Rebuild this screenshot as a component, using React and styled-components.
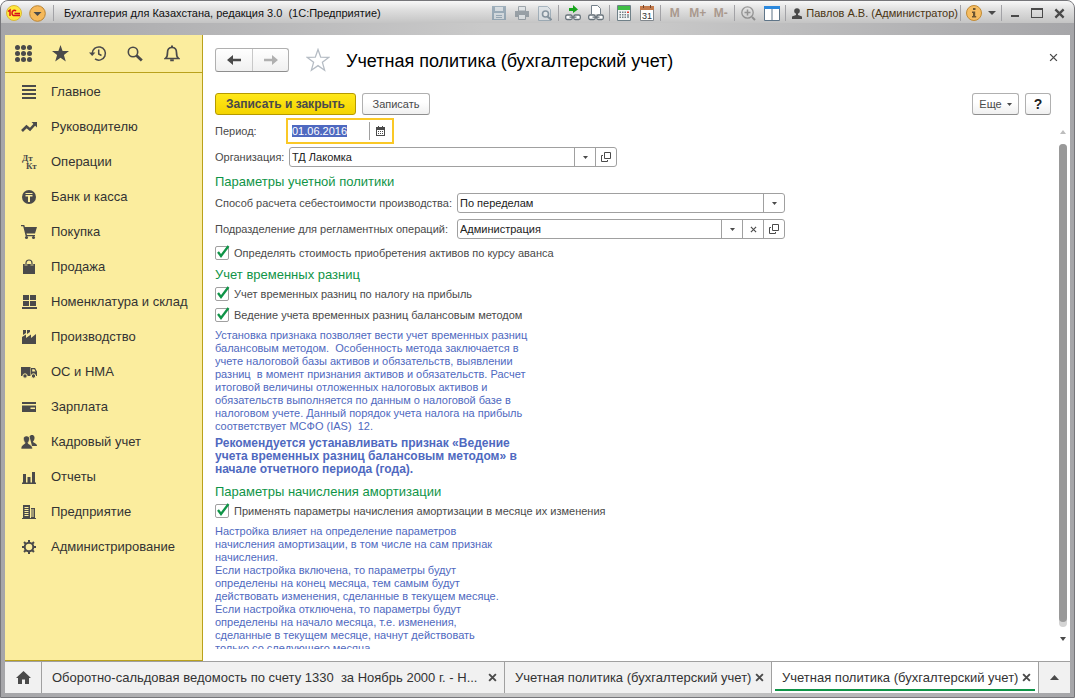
import React, { useEffect, useRef } from "react";
import styled, { createGlobalStyle, css } from "styled-components";

const ink = "#4a4a4a";
const green = "#0f9447";
const line = "#a0a0a0";

const Global = createGlobalStyle`
  *, *::before, *::after { box-sizing: border-box; }
  body { margin: 0; background: #fff; }
  body, button, input { font-family: "Liberation Sans", Arial, sans-serif; }
  button { padding: 0; border: 0; background: none; color: ${ink}; cursor: pointer; }
  svg { display: block; flex: none; }
`;

const Window = styled.div`
  height: 100vh;
  display: flex;
  flex-direction: column;
  padding: 0 4px 4px;
  border: 1px solid #76767a;
  border-radius: 8px 8px 0 0;
  background: linear-gradient(90deg, #a6a6a9, #c9c9c9 45%, #c9c9c9 60%, #a6a6a9);
  overflow: hidden;
`;

/* ---------- title bar ---------- */

const TitleBar = styled.header`
  flex: none;
  height: 22px;
  margin: 0 -4px 12px;
  padding: 2px 4px 0;
  display: flex;
  align-items: center;
  background: linear-gradient(#f8f8f8, #dfdfdf 40%, #c4c4c4);
`;

const Caption = styled.h1`
  flex: 1;
  margin: 0;
  padding-left: 8px;
  font-size: 11px;
  font-weight: 400;
  color: #111;
  white-space: pre;
  overflow: hidden;
`;

const BarButton = styled.button`
  width: ${(p) => p.$w || 23}px;
  height: 20px;
  display: flex;
  flex: none;
  align-items: center;
  justify-content: center;
  opacity: ${(p) => (p.disabled ? 0.6 : 1)};
`;

const MemoryButton = styled(BarButton)`
  font-size: 12px;
  font-weight: 700;
  color: #8b6f5c;
`;

const Divider = styled.span`
  width: 1px;
  height: 16px;
  margin: 0 2px;
  flex: none;
  background: #a2a2a6;
`;

const User = styled.button`
  height: 20px;
  padding-left: 4px;
  display: flex;
  flex: none;
  align-items: center;
  gap: 4px;
  font-size: 11px;
  color: #4a3513;
  white-space: nowrap;
`;

/* ---------- work area ---------- */

const Workspace = styled.div`
  flex: 1;
  min-height: 0;
  display: flex;
  background: #fff;
`;

const Sidebar = styled.aside`
  width: 198px;
  flex: none;
  background: #fbed9e;
  border-right: 1px solid #b9a11c;
  border-bottom: 1px solid #b9a11c;
`;

const Tools = styled.div`
  height: 38px;
  display: flex;
  border-bottom: 1px solid #b9a11c;
`;

const ToolButton = styled.button`
  width: 37px;
  display: flex;
  align-items: center;
  justify-content: center;
`;

const Menu = styled.nav`
  display: flex;
  flex-direction: column;
  padding-top: 1px;
`;

const MenuItem = styled.a`
  height: 35px;
  padding-left: 16px;
  display: flex;
  align-items: center;
  gap: 14px;
  font-size: 13px;
  color: #333;
  text-decoration: none;
  white-space: nowrap;
`;

const Main = styled.main`
  flex: 1;
  min-width: 0;
  display: flex;
  flex-direction: column;
  padding: 12px 0 12px 12px;
`;

const PageHead = styled.div`
  display: flex;
  align-items: center;
  height: 26px;
  padding-right: 9px;
`;

const History = styled.div`
  display: flex;
  height: 24px;
  border: 1px solid #b0b0b0;
  border-bottom-color: #8e8e8e;
  border-radius: 3px;
  background: linear-gradient(#fff, #f0f0f0);
`;

const HistoryButton = styled.button`
  width: 36px;
  display: flex;
  align-items: center;
  justify-content: center;
  & + & { border-left: 1px solid #c8c8c8; }
`;

const StarButton = styled.button`
  margin: 0 16px 0 17px;
`;

const Title = styled.h2`
  flex: 1;
  margin: 0;
  padding-top: 2px;
  font-size: 18px;
  font-weight: 400;
  color: #000;
  white-space: nowrap;
`;

const CloseButton = styled.button`
  height: 20px;
  width: 15px;
  display: flex;
  align-items: center;
  justify-content: center;
  align-self: flex-start;
`;

const Commands = styled.div`
  display: flex;
  gap: 6px;
  margin-top: 20px;
  padding-right: 19px;
`;

const Button = styled.button`
  height: 22px;
  width: ${(p) => p.$w}px;
  display: flex;
  align-items: center;
  justify-content: center;
  gap: 5px;
  border: 1px solid #b0b0b0;
  border-bottom-color: #8e8e8e;
  border-radius: 3px;
  background: linear-gradient(#fff 40%, #f0f0f0);
  font-size: 11px;
  white-space: nowrap;
  ${(p) => p.$primary && css`
    border-color: #b59a00;
    background: linear-gradient(#ffe81a, #f4d400);
    font-size: 12px;
    font-weight: 700;
  `}
`;

const Spacer = styled.span`
  flex: 1;
`;

const Help = styled(Button)`
  font-size: 14px;
  font-weight: 700;
  color: #222;
`;

/* ---------- form ---------- */

const ScrollPane = styled.div`
  flex: 1;
  min-height: 0;
  display: flex;
  margin-top: 3px;
`;

const Form = styled.form`
  flex: 1;
  min-width: 0;
  overflow: hidden;
`;

const Row = styled.div`
  height: 26px;
  display: flex;
  align-items: center;
`;

const Label = styled.label`
  width: ${(p) => p.$w}px;
  flex: none;
  font-size: 11px;
  color: ${ink};
  white-space: nowrap;
`;

const Field = styled.div`
  width: ${(p) => p.$w}px;
  height: 20px;
  display: flex;
  border: 1px solid ${line};
  border-radius: 3px;
  background: #fff;
  ${(p) => p.$active && css`
    border-color: #fff;
    border-radius: 0;
    outline: 2px solid #fac826;
    outline-offset: 1px;
  `}
`;

const Input = styled.input`
  flex: 1;
  min-width: 0;
  height: 18px;
  padding: 0 2px;
  border: 0;
  outline: 0;
  background: none;
  font-size: 11px;
  color: #222;
  &::selection { background: #4f69c0; color: #fff; }
`;

const FieldButton = styled.button`
  width: 21px;
  flex: none;
  display: flex;
  align-items: center;
  justify-content: center;
  border-left: 1px solid ${line};
`;

const Heading = styled.h3`
  height: 20px;
  margin: 0;
  padding-top: 3px;
  font-size: 13px;
  line-height: 17px;
  font-weight: 400;
  color: ${green};
`;

const Check = styled.label`
  height: 21px;
  display: flex;
  align-items: center;
  gap: 5px;
  font-size: 11px;
  color: ${ink};
  white-space: nowrap;
`;

const CheckInput = styled.input`
  appearance: none;
  width: 14px;
  height: 14px;
  margin: 0;
  flex: none;
  border: 1px solid ${line};
  border-radius: 2px;
  background: #fff;
`;

const CheckBox = styled.span`
  position: relative;
  display: flex;
  svg { position: absolute; left: 1px; top: -1px; display: none; pointer-events: none; }
  input:checked + svg { display: block; }
`;

const Note = styled.p`
  margin: 4px 0;
  font-size: ${(p) => (p.$strong ? 12 : 11)}px;
  line-height: 13px;
  font-weight: ${(p) => (p.$strong ? 700 : 400)};
  color: #4f69c0;
  white-space: pre;
`;

const ScrollBar = styled.div`
  width: 15px;
  flex: none;
  display: flex;
  flex-direction: column;
  align-items: center;
  gap: 10px;
  padding: 12px 0 8px;
`;

const Track = styled.div`
  flex: 1;
  width: 8px;
  padding-bottom: 5px;
  border-radius: 4px;
  background: #d4d4d4;
`;

const Thumb = styled.div`
  height: 100%;
  border-radius: 4px;
  background: #999;
`;

/* ---------- open windows ---------- */

const TabBar = styled.footer`
  flex: none;
  height: 32px;
  display: flex;
  border-top: 1px solid ${line};
  background: #f1f1f1;
`;

const TabSide = styled.button`
  width: ${(p) => p.$w}px;
  flex: none;
  display: flex;
  align-items: center;
  justify-content: center;
`;

const Tab = styled.div`
  flex: ${(p) => p.$grow} 1 0;
  min-width: 0;
  display: flex;
  align-items: center;
  padding: 0 4px 0 10px;
  border-left: 1px solid ${line};
  background: ${(p) => (p.$active ? "#fff" : "none")};
  position: relative;
  ${(p) => p.$active && css`
    &::after {
      content: "";
      position: absolute;
      left: 3px;
      right: 3px;
      bottom: 2px;
      height: 2px;
      background: ${green};
    }
    & + button { border-left: 1px solid ${line}; }
  `}
`;

const TabLink = styled.a`
  flex: 1;
  min-width: 0;
  font-size: 13px;
  color: #333;
  text-decoration: none;
  white-space: pre;
  overflow: hidden;
`;

const TabClose = styled.button`
  width: 15px;
  height: 15px;
  flex: none;
  display: flex;
  align-items: center;
  justify-content: center;
`;

/* ---------- drawings ---------- */

const Icon = ({ size = 16, w, h, box, children, ...rest }) => (
  <svg
    width={w || size}
    height={h || size}
    viewBox={box || `0 0 ${w || size} ${h || size}`}
    fill={ink}
    aria-hidden="true"
    {...rest}
  >
    {children}
  </svg>
);

const Cross = ({ size = 7, width = 1.3 }) => (
  <Icon size={size} box="0 0 8 8">
    <path d="M1 1l6 6M7 1L1 7" stroke={ink} strokeWidth={width} />
  </Icon>
);

const Down = ({ w = 5, h = 3, color = ink }) => (
  <Icon w={w} h={h} box="0 0 6 3" preserveAspectRatio="none">
    <path d="M0 0h6L3 3z" fill={color} />
  </Icon>
);

const Up = ({ w, h, color = ink }) => (
  <Icon w={w} h={h} box="0 0 6 3" preserveAspectRatio="none">
    <path d="M0 3h6L3 0z" fill={color} />
  </Icon>
);

const OpenIcon = () => (
  <Icon size={10} fill="none" stroke={ink}>
    <path d="M3.5 0.5h6v6h-6zM2 3.5H0.5v6h6V8" />
  </Icon>
);

const CalendarSmall = () => (
  <Icon w={9} h={10}>
    <path d="M0 1h9v9H0z M1 4v5h7V4z" fillRule="evenodd" />
    <path d="M2 0h1v2H2zM6 0h1v2H6zM2 5h1v1H2zM4 5h1v1H4zM6 5h1v1H6zM2 7h1v1H2zM4 7h1v1H4zM6 7h1v1H6z" />
  </Icon>
);

const Tick = () => (
  <Icon w={14} h={14} fill="none">
    <path d="M2 7l3 4L12.5 1" stroke={green} strokeWidth="2.3" />
  </Icon>
);

const toolIcons = [
  ["Меню функций", <Icon size={17}>
    {[2.5, 8.5, 14.5].map((y) => [2.5, 8.5, 14.5].map((x) => (
      <circle key={`${x}-${y}`} cx={x} cy={y} r="2.5" />
    )))}
  </Icon>],
  ["Избранное", <Icon size={17}>
    <path d="M8.500 0l2.100 6 6.400.1-5.100 3.900 1.900 6.500-5.300-3.800-5.300 3.800 1.900-6.500L0 6.100 6.400 6z" />
  </Icon>],
  ["История", <Icon w={18} h={17} fill="none" stroke={ink} strokeWidth="1.5">
    <path d="M3.2 8.5A6.600 6.600 0 1 1 6 13.900" />
    <path d="M9.700 4.500v4.500l2.800 1.500" />
    <path d="M0 7.500h6.400L3.200 11z" fill={ink} stroke="none" />
  </Icon>],
  ["Поиск", <Icon size={16} fill="none" stroke={ink}>
    <circle cx="6" cy="6" r="4.7" strokeWidth="1.6" />
    <path d="M9.500 9.500l5.300 5" strokeWidth="2.8" />
  </Icon>],
  ["Оповещения", <Icon w={16} h={17} fill="none" stroke={ink} strokeWidth="1.7">
    <path d="M1.500 13.500c2-1.500 2-3 2-6 0-3.500 2-5 4.500-5s4.500 1.500 4.500 5c0 3 0 4.500 2 6z" />
    <path d="M8 0.500v2" strokeWidth="2" />
    <path d="M6.200 15.300h3.600" strokeWidth="2" />
  </Icon>],
];

const menu = [
  ["Главное", <path d="M1 1h14v2H1zM1 5h14v2H1zM1 9h14v2H1zM1 13h14v2H1z" />],
  ["Руководителю", <>
    <path d="M1 12l4.500-4.500 3.500 3L14 5" fill="none" stroke={ink} strokeWidth="2.6" />
    <path d="M10.500 3H16v5.500z" />
  </>],
  ["Операции", <g fontFamily="Liberation Serif, serif" fontWeight="700" fontSize="9">
    <text x="1" y="7">Дт</text>
    <text x="5" y="15">Кт</text>
  </g>],
  ["Банк и касса", <>
    <circle cx="8" cy="8" r="7" />
    <path d="M4.500 4h7v1h-7zM4.500 6h7v1.500H9V13H7V7.500H4.500z" fill="#fbed9e" />
  </>],
  ["Покупка", <>
    <path d="M0 1h3.300l.6 2H16l-2 6.500H5.500l.5 1.500h8v1.200H4.700L2.200 2.200H0z" />
    <circle cx="5.500" cy="13.500" r="1.500" /><circle cx="12.500" cy="13.500" r="1.500" />
  </>],
  ["Продажа", <>
    <path d="M2 5h12v10H2z" />
    <path d="M5 7V4c0-4 6-4 6 0v3" fill="none" stroke="#fbed9e" strokeWidth="2.4" />
    <path d="M5 7V4c0-4 6-4 6 0v3" fill="none" stroke={ink} strokeWidth="1.2" />
  </>],
  ["Номенклатура и склад", <path d="M2 1h6v5H2zM9 1h6v5H9zM2 7h6v5H2zM9 7h6v5H9zM1 13h15v2H1z" />],
  ["Производство", <path d="M1 15V8l4-2.500V9l5-3.500V9l5-4v10zM2 1h3v3L2 6zM6 1h3v2L6 5z" />],
  ["ОС и НМА", <>
    <path d="M0 3h9.500v9H0zM10 4h4l2 3.500V12h-6zM11.200 5.200V7.500h3.300l-1.200-2.300z" fillRule="evenodd" />
    <circle cx="4" cy="12" r="2.2" stroke="#fbed9e" /><circle cx="12.500" cy="12" r="2.2" stroke="#fbed9e" />
  </>],
  ["Зарплата", <path d="M1 3h14v2H1zM1 6.500h14V13H1zM9.500 8.500V10H14V8.500z" fillRule="evenodd" />],
  ["Кадровый учет", <>
    <path d="M8.500 2.500C9 .5 13 0 13.500 3c.2 2-.5 3.500-1.500 4.500 0 1.500 4 1.500 4 4.500H11z" />
    <path d="M2.500 4.500c0-3.500 6-3.500 6 0 0 2-.7 3.300-1.500 4.200 0 2 4.500 1.500 4.500 6.300H0c0-4.800 4-4.300 4-6.300C3.200 7.800 2.500 6.500 2.500 4.500z" stroke="#fbed9e" strokeWidth=".6" />
  </>],
  ["Отчеты", <path d="M1 13.500h14V15H1zM2 5h3v8.500H2zM6.500 8h3v5.500h-3zM11 3h3v10.500h-3z" />],
  ["Предприятие", <path d="M2 1h7v13H2zM3.500 3v1h4V3zM3.500 5v1h4V5zM3.500 7v1h4V7zM3.500 9v1h4V9zM3.500 11v1h4v-1zM10 4h4v10h-4zM10 5.500v1h3v-1zM10 7.500v1h3v-1zM10 9.500v1h3v-1zM10 11.500v1h3v-1zM1 14h14v1H1z" fillRule="evenodd" />],
  ["Администрирование", <>
    <circle cx="8" cy="8" r="4.3" fill="none" stroke={ink} strokeWidth="2" />
    {[0, 45, 90, 135, 180, 225, 270, 315].map((a) => (
      <path key={a} d="M7 1h2v3H7z" transform={`rotate(${a} 8 8)`} />
    ))}
  </>],
];

const Links = () => (
  <g fill="none" stroke="#68737b" strokeWidth="1.3">
    <rect x="0.7" y="10" width="6.5" height="4.5" rx="1.5" fill="#fff" />
    <rect x="8.8" y="10" width="6.5" height="4.5" rx="1.5" fill="#fff" />
    <path d="M4.500 12.200h7" />
  </g>
);

const Toolbar = () => (
  <>
    <BarButton type="button" disabled aria-label="Сохранить">
      <Icon size={14}><path d="M0 0h14v14H0z" fill="#6f8ba0" /><path d="M3 1h8v4H3zM2 7h10v6H2z" fill="#cfd9e0" /><path d="M4 9h6v1H4zM4 11h6v1H4z" fill="#6f8ba0" /></Icon>
    </BarButton>
    <BarButton type="button" disabled aria-label="Печать">
      <Icon size={14}><path d="M0 5h14v6H0z" fill="#6d7a84" /><path d="M3.500.5h7V5h-7zM3.500 8.500h7v5h-7z" fill="#dfe5e9" stroke="#6d7a84" /></Icon>
    </BarButton>
    <BarButton type="button" disabled aria-label="Просмотр">
      <Icon w={14} h={15}><path d="M.5.5h9l3 3v11H.5z" fill="#dbe3e9" stroke="#7d94a5" /><circle cx="7.500" cy="8" r="3" fill="#eef3f6" stroke="#50687a" strokeWidth="1.6" /><path d="M9.500 10.500l4 3.500" stroke="#50687a" strokeWidth="2" /></Icon>
    </BarButton>
    <Divider />
    <BarButton type="button" aria-label="Получить ссылку">
      <Icon size={16}><path d="M4 3h4V0l5 4.500L8 8V6H4z" fill="#17a51c" /><Links /></Icon>
    </BarButton>
    <BarButton type="button" aria-label="Перейти по ссылке">
      <Icon size={16}><path d="M3.500 9V.5h6l3 3V9" fill="#fff" stroke="#74808a" /><Links /></Icon>
    </BarButton>
    <Divider />
    <BarButton type="button" aria-label="Калькулятор">
      <Icon w={14} h={16}><path d="M.5.5h13v15H.5z" fill="#f2f5f5" stroke="#6f8088" /><path d="M1 1h12v4H1z" fill="#3fbe45" />
        {[6.5, 9, 11.5].map((y) => [2.5, 5, 7.5].map((x) => <rect key={`${x}-${y}`} x={x} y={y} width="1.5" height="1.5" fill="#748188" />))}
        <path d="M10 6.500h2V8h-2z" fill="#e23b2e" /><path d="M10 9h2v4h-2z" fill="#9aa5aa" /></Icon>
    </BarButton>
    <BarButton type="button" aria-label="Календарь">
      <Icon w={14} h={16}><path d="M.5 1.500h13v14H.5z" fill="#fff" stroke="#81878c" /><path d="M0 1h14v4H0z" fill="#c4794a" /><path d="M3 0h1v3H3zM10 0h1v3h-1z" fill="#70452c" /><text x="7" y="13.500" fontSize="9" textAnchor="middle" fill="#333">31</text></Icon>
    </BarButton>
    <Divider />
    <MemoryButton type="button" disabled>M</MemoryButton>
    <MemoryButton type="button" disabled>M+</MemoryButton>
    <MemoryButton type="button" disabled>M-</MemoryButton>
    <Divider />
    <BarButton type="button" disabled aria-label="Масштаб">
      <Icon size={15} fill="none" stroke="#666"><circle cx="6.500" cy="6.500" r="5.7" strokeWidth="1.3" /><path d="M3.500 6.500h6M6.500 3.500v6" strokeWidth="1.5" /><path d="M11 11l3 3" strokeWidth="2" /></Icon>
    </BarButton>
    <BarButton type="button" aria-label="Панели">
      <Icon w={16} h={15}><path d="M.5.5h15v14H.5z" fill="#fff" stroke="#5f7588" /><path d="M0 0h16v3H0z" fill="#2b88dd" /><path d="M7.500 3h1v12h-1z" fill="#5f7588" /></Icon>
    </BarButton>
    <Divider />
  </>
);

const CheckRow = ({ id, children }) => (
  <Check htmlFor={id}>
    <CheckBox>
      <CheckInput id={id} type="checkbox" defaultChecked />
      <Tick />
    </CheckBox>
    {children}
  </Check>
);

const DropButton = () => (
  <FieldButton type="button" aria-label="Выбрать из списка"><Down /></FieldButton>
);

const OpenButton = () => (
  <FieldButton type="button" aria-label="Открыть"><OpenIcon /></FieldButton>
);

export default function App() {
  const period = useRef(null);
  useEffect(() => {
    period.current.focus();
    period.current.select();
  }, []);

  return (
    <>
      <Global />
      <Window>
        <TitleBar>
          <BarButton type="button" $w={18} aria-label="1С">
            <Icon size={16}>
              <circle cx="8" cy="8" r="7.5" fill="#ffe83b" stroke="#d8b63a" />
              <path d="M2 6.500l2-1.500v6M10 6C8.500 4.500 6 5.500 6 8s1.500 2.800 3.500 2.500H14M10 8.500h-1.500M9 8.500h5" fill="none" stroke="#d8131c" strokeWidth="1.5" />
            </Icon>
          </BarButton>
          <BarButton type="button" $w={28} aria-label="Главное меню">
            <Icon size={17}>
              <circle cx="8.5" cy="8.5" r="7.8" fill="#f6b95a" stroke="#b98333" />
              <path d="M4.500 7h8l-4 4z" />
            </Icon>
          </BarButton>
          <Divider />
          <Caption>Бухгалтерия для Казахстана, редакция 3.0  (1С:Предприятие)</Caption>
          <Toolbar />
          <User type="button">
            <Icon w={10} h={11}><circle cx="5" cy="3" r="2.8" /><path d="M4 5h2v2l4 1.500V11H0V8.500L4 7z" /></Icon>
            Павлов А.В. (Администратор)
          </User>
          <Divider />
          <BarButton type="button" $w={22} aria-label="Справка">
            <Icon size={16}>
              <circle cx="8" cy="8" r="7.5" fill="#f6bd62" stroke="#c08a35" />
              <path d="M7 3h2.500v2H7zM6 6.500h3.200V11h1v1.500H6V11h1V8H6z" fill="#6a5532" />
            </Icon>
          </BarButton>
          <BarButton type="button" $w={14} aria-label="Ещё"><Down w={8} h={4} /></BarButton>
          <Divider />
          <BarButton type="button" $w={22} aria-label="Свернуть"><Icon w={8} h={8}><path d="M0 6h8v2H0z" /></Icon></BarButton>
          <BarButton type="button" $w={22} aria-label="Развернуть"><Icon w={12} h={10}><path d="M0 0h12v10H0zM1 2v7h10V2z" fillRule="evenodd" /></Icon></BarButton>
          <BarButton type="button" $w={22} aria-label="Закрыть программу"><Cross size={11} width={1.7} /></BarButton>
        </TitleBar>

        <Workspace>
          <Sidebar>
            <Tools>
              {toolIcons.map(([name, icon]) => (
                <ToolButton key={name} type="button" aria-label={name}>{icon}</ToolButton>
              ))}
            </Tools>
            <Menu>
              {menu.map(([name, icon]) => (
                <MenuItem key={name} href="#"><Icon>{icon}</Icon>{name}</MenuItem>
              ))}
            </Menu>
          </Sidebar>

          <Main>
            <PageHead>
              <History>
                <HistoryButton type="button" aria-label="Назад">
                  <Icon w={14} h={10}><path d="M0 5l6-5v3.700h8v2.600H6V10z" /></Icon>
                </HistoryButton>
                <HistoryButton type="button" aria-label="Вперед">
                  <Icon w={14} h={10} fill="#b0b0b0"><path d="M14 5L8 0v3.700H0v2.600h8V10z" /></Icon>
                </HistoryButton>
              </History>
              <StarButton type="button" aria-label="В избранное">
                <Icon size={24} fill="none" stroke="#b5bcc4" strokeWidth="1.3">
                  <path d="M12 1.500l2.700 7.700 8 .2-6.300 4.900 2.200 7.900L12 17.600l-6.600 4.600 2.200-7.900L1.300 9.400l8-.2z" />
                </Icon>
              </StarButton>
              <Title>Учетная политика (бухгалтерский учет)</Title>
              <CloseButton type="button" aria-label="Закрыть"><Cross size={9} width={1.2} /></CloseButton>
            </PageHead>

            <Commands>
              <Button type="button" $w={141} $primary>Записать и закрыть</Button>
              <Button type="button" $w={68}>Записать</Button>
              <Spacer />
              <Button type="button" $w={47}>Еще <Down /></Button>
              <Help type="button" $w={26}>?</Help>
            </Commands>

            <ScrollPane>
              <Form>
                <Row>
                  <Label htmlFor="period" $w={74}>Период:</Label>
                  <Field $w={102} $active>
                    <Input id="period" ref={period} defaultValue="01.06.2016" />
                    <FieldButton type="button" aria-label="Выбрать дату"><CalendarSmall /></FieldButton>
                  </Field>
                </Row>
                <Row>
                  <Label htmlFor="org" $w={74}>Организация:</Label>
                  <Field $w={328}>
                    <Input id="org" defaultValue="ТД Лакомка" />
                    <DropButton />
                    <OpenButton />
                  </Field>
                </Row>

                <Heading>Параметры учетной политики</Heading>
                <Row>
                  <Label htmlFor="method" $w={242}>Способ расчета себестоимости производства:</Label>
                  <Field $w={328}>
                    <Input id="method" defaultValue="По переделам" />
                    <DropButton />
                  </Field>
                </Row>
                <Row>
                  <Label htmlFor="unit" $w={242}>Подразделение для регламентных операций:</Label>
                  <Field $w={328}>
                    <Input id="unit" defaultValue="Администрация" />
                    <DropButton />
                    <FieldButton type="button" aria-label="Очистить"><Cross /></FieldButton>
                    <OpenButton />
                  </Field>
                </Row>
                <CheckRow id="advance">Определять стоимость приобретения активов по курсу аванса</CheckRow>

                <Heading>Учет временных разниц</Heading>
                <CheckRow id="profit">Учет временных разниц по налогу на прибыль</CheckRow>
                <CheckRow id="balance">Ведение учета временных разниц балансовым методом</CheckRow>
                <Note>{`Установка признака позволяет вести учет временных разниц
балансовым методом.  Особенность метода заключается в
учете налоговой базы активов и обязательств, выявлении
разниц  в момент признания активов и обязательств. Расчет
итоговой величины отложенных налоговых активов и
обязательств выполняется по данным о налоговой базе в
налоговом учете. Данный порядок учета налога на прибыль
соответствует МСФО (IAS)  12.`}</Note>
                <Note $strong>{`Рекомендуется устанавливать признак «Ведение
учета временных разниц балансовым методом» в
начале отчетного периода (года).`}</Note>

                <Heading>Параметры начисления амортизации</Heading>
                <CheckRow id="amort">Применять параметры начисления амортизации в месяце их изменения</CheckRow>
                <Note>{`Настройка влияет на определение параметров
начисления амортизации, в том числе на сам признак
начисления.
Если настройка включена, то параметры будут
определены на конец месяца, тем самым будут
действовать изменения, сделанные в текущем месяце.
Если настройка отключена, то параметры будут
определены на начало месяца, т.е. изменения,
сделанные в текущем месяце, начнут действовать
только со следующего месяца.`}</Note>
              </Form>
              <ScrollBar>
                <Up w={6} h={4} color="#bdbdbd" />
                <Track><Thumb /></Track>
                <Down w={6} h={4} />
              </ScrollBar>
            </ScrollPane>
          </Main>
        </Workspace>

        <TabBar>
          <TabSide type="button" $w={36} aria-label="Начальная страница">
            <Icon w={15} h={13}><path d="M7.500 0L15 7h-2v6H9V8.500H6V13H2V7H0z" /></Icon>
          </TabSide>
          <Tab $grow={448}>
            <TabLink href="#">Оборотно-сальдовая ведомость по счету 1330  за Ноябрь 2000 г. - Н...</TabLink>
            <TabClose type="button" aria-label="Закрыть вкладку"><Cross size={9} width={1.7} /></TabClose>
          </Tab>
          <Tab $grow={252}>
            <TabLink href="#">Учетная политика (бухгалтерский учет)</TabLink>
            <TabClose type="button" aria-label="Закрыть вкладку"><Cross size={9} width={1.7} /></TabClose>
          </Tab>
          <Tab $grow={252} $active>
            <TabLink href="#">Учетная политика (бухгалтерский учет)</TabLink>
            <TabClose type="button" aria-label="Закрыть вкладку"><Cross size={9} width={1.7} /></TabClose>
          </Tab>
          <TabSide type="button" $w={32} aria-label="Показать все окна"><Up w={9} h={5} /></TabSide>
        </TabBar>
      </Window>
    </>
  );
}
